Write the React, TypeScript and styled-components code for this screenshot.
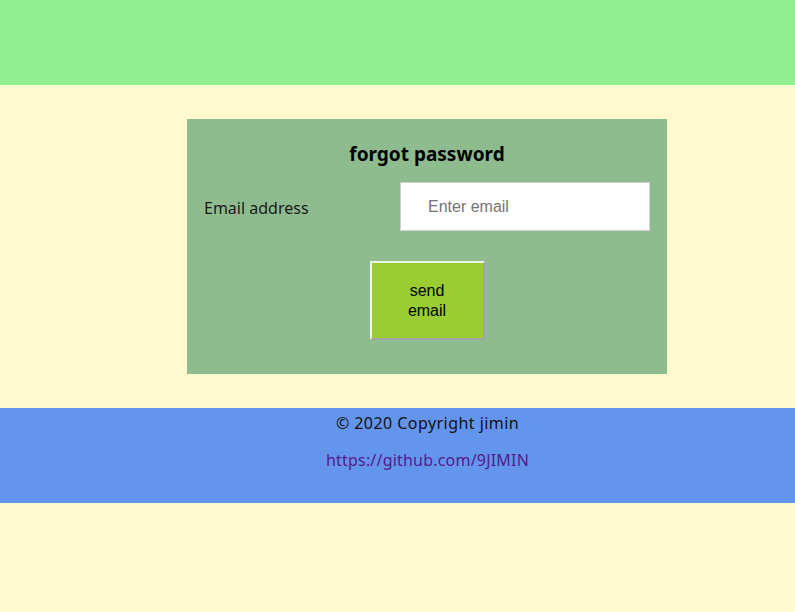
import React from "react";
import styled, { createGlobalStyle } from "styled-components";

const Global = createGlobalStyle`
  html, body { margin: 0; padding: 0; background: #fffacd; }
  body { font-family: "Noto Sans", "Open Sans", sans-serif; color: #000; }
`;

const Page = styled.div`
  display: flex;
  flex-direction: column;
  min-height: 612px;
  background: #fffacd;
`;

const Header = styled.header`
  height: 85px;
  background: #90ee90;
`;

const Main = styled.main`
  padding: 34px 0 34px 187px;
`;

const Card = styled.section`
  width: 480px;
  height: 255px;
  box-sizing: border-box;
  background: #8fbc8f;
  display: flex;
  flex-direction: column;
  align-items: center;
  padding-top: 22px;
`;

const Title = styled.h2`
  margin: 0;
  font-size: 19px;
  font-weight: 700;
  line-height: 26px;
`;

const Row = styled.div`
  align-self: stretch;
  display: flex;
  align-items: center;
  justify-content: space-between;
  padding: 0 17px;
  margin-top: 15px;
`;

const Label = styled.label`
  font-size: 16px;
  line-height: 20px;
  margin-top: 2px;
  color: #1a1a1a;
`;

const Input = styled.input`
  width: 250px;
  height: 49px;
  box-sizing: border-box;
  border: 1px solid #d0d0d0;
  background: #fff;
  padding: 0 0 0 27px;
  font-family: "Liberation Sans", Arial, sans-serif;
  font-size: 16px;
  outline: none;
  &::placeholder { color: #757575; }
`;

const Button = styled.button`
  margin-top: 30px;
  width: 115px;
  height: 79px;
  box-sizing: border-box;
  background: #9acd32;
  border: 2px solid;
  border-color: #eef6e4 #a3a3a3 #a3a3a3 #eef6e4;
  font-family: "Liberation Sans", Arial, sans-serif;
  font-size: 16px;
  line-height: 20px;
  color: #000;
  padding: 0 25px;
`;

const Footer = styled.footer`
  height: 95px;
  background: #6495ed;
  display: flex;
  flex-direction: column;
  align-items: center;
  padding-left: 60px;
  padding-top: 4px;
  box-sizing: border-box;
  font-size: 16px;
`;

const Copy = styled.p`
  margin: 0;
  line-height: 22px;
  color: #111;
  letter-spacing: 0.45px;
`;

const Link = styled.a`
  margin-top: 15px;
  line-height: 22px;
  color: #551a8b;
  text-decoration: none;
  letter-spacing: 0.2px;
`;

export default function App() {
  return (
    <Page>
      <Global />
      <Header />
      <Main>
        <Card>
          <Title>forgot password</Title>
          <Row>
            <Label htmlFor="email">Email address</Label>
            <Input id="email" type="email" placeholder="Enter email" />
          </Row>
          <Button>send email</Button>
        </Card>
      </Main>
      <Footer>
        <Copy>© 2020 Copyright jimin</Copy>
        <Link href="#">https://github.com/9JIMIN</Link>
      </Footer>
    </Page>
  );
}
